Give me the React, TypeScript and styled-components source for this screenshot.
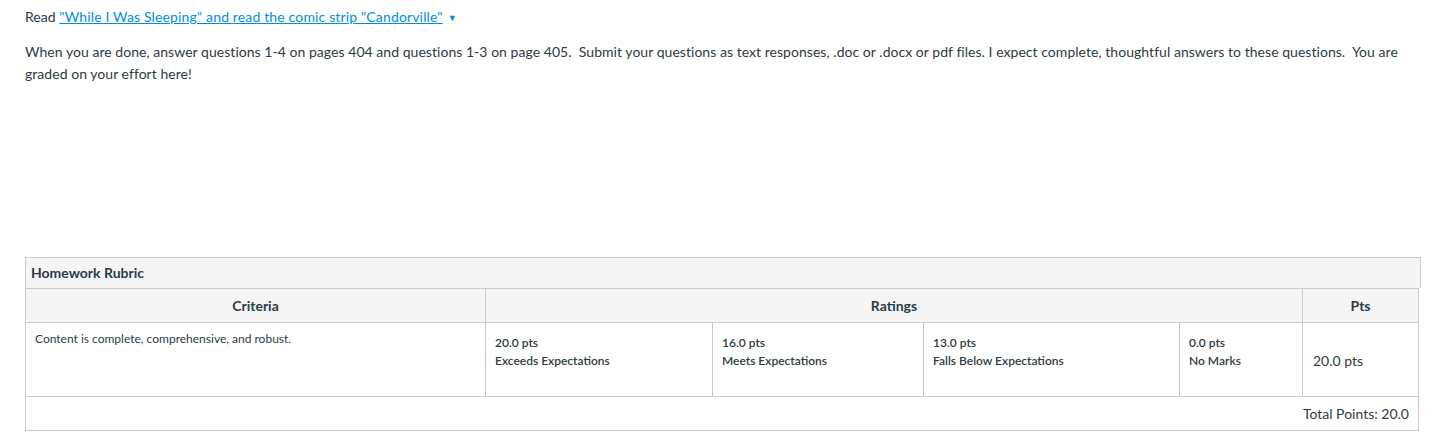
import React from "react"
import styled, { createGlobalStyle } from "styled-components"

const GlobalStyle = createGlobalStyle`
  body {
    margin: 0;
    background: #fff;
    font-family: Lato, "Open Sans", "Liberation Sans", sans-serif;
    color: #2d3b45;
  }
`

const ratings = [
  { points: "20.0 pts", label: "Exceeds Expectations", width: 227 },
  { points: "16.0 pts", label: "Meets Expectations", width: 211 },
  { points: "13.0 pts", label: "Falls Below Expectations", width: 256 },
  { points: "0.0 pts", label: "No Marks", width: 122 },
]

export default function App() {
  return (
    <>
      <GlobalStyle />
      <Page>
        <Text>
          Read{" "}
          <Link href="#">"While I Was Sleeping" and read the comic strip "Candorville"</Link>
          <Caret>▼</Caret>
        </Text>
        <Text>
          When you are done, answer questions 1-4 on pages 404 and questions 1-3 on page 405.&nbsp; Submit your
          questions as text responses, .doc or .docx or pdf files. I expect complete, thoughtful answers to these
          questions.&nbsp; You are graded on your effort here!
        </Text>

        <Rubric>
          <Caption>Homework Rubric</Caption>
          <Grid>
            <HeadCell>Criteria</HeadCell>
            <HeadCell>Ratings</HeadCell>
            <HeadCell $last>Pts</HeadCell>

            <CriterionCell>Content is complete, comprehensive, and robust.</CriterionCell>
            <RatingsCell>
              {ratings.map((r, i) => (
                <Rating key={r.points} $width={r.width} $last={i === ratings.length - 1}>
                  <div>{r.points}</div>
                  <div>{r.label}</div>
                </Rating>
              ))}
            </RatingsCell>
            <PointsCell>20.0 pts</PointsCell>

            <TotalRow>Total Points: 20.0</TotalRow>
          </Grid>
        </Rubric>
      </Page>
    </>
  )
}

const Page = styled.div`
  padding: 6px 23px 0 25px;
`

const Text = styled.p`
  margin: 0 0 12px;
  font-size: 14px;
  line-height: 22px;
  letter-spacing: 0.04px;
`

const Link = styled.a`
  color: #008ee2;
  text-decoration: underline;
  letter-spacing: 0.15px;
`

const Caret = styled.span`
  display: inline-block;
  margin-left: 5px;
  font-size: 9px;
  color: #008ee2;
  vertical-align: 1px;
`

const Rubric = styled.div`
  margin-top: 172px;
  width: 1396px;
`

const Caption = styled.div`
  box-sizing: border-box;
  height: 31px;
  padding: 0 5px;
  border: 1px solid #c7cdd1;
  border-bottom: none;
  background: #f5f5f5;
  font-size: 14px;
  font-weight: 700;
  line-height: 30px;
`

const Grid = styled.div`
  display: grid;
  grid-template-columns: 460px 817px 115px;
  grid-template-rows: 34px 74px 33px;
  width: 1392px;
  border: 1px solid #c7cdd1;
  font-size: 12px;
`

const HeadCell = styled.div<{ $last?: boolean }>`
  display: flex;
  align-items: center;
  justify-content: center;
  background: #f5f5f5;
  border-bottom: 1px solid #c7cdd1;
  border-right: ${(p) => (p.$last ? "none" : "1px solid #c7cdd1")};
  font-size: 14px;
  font-weight: 700;
  padding-bottom: 1px;
`

const CriterionCell = styled.div`
  border-right: 1px solid #c7cdd1;
  border-bottom: 1px solid #c7cdd1;
  padding: 8px 9px;
  line-height: 16px;
`

const RatingsCell = styled.div`
  display: flex;
  border-right: 1px solid #c7cdd1;
  border-bottom: 1px solid #c7cdd1;
`

const Rating = styled.div<{ $width: number; $last: boolean }>`
  box-sizing: border-box;
  width: ${(p) => p.$width}px;
  flex: none;
  padding: 11px 9px 0;
  border-right: ${(p) => (p.$last ? "none" : "1px solid #c1c7cb")};
  font-weight: 600;
  line-height: 18px;
`

const PointsCell = styled.div`
  display: flex;
  align-items: center;
  padding: 2px 10px 0;
  border-bottom: 1px solid #c7cdd1;
  font-size: 14px;
`

const TotalRow = styled.div`
  grid-column: 1 / -1;
  display: flex;
  align-items: center;
  justify-content: flex-end;
  padding-right: 9px;
  font-size: 14px;
`
